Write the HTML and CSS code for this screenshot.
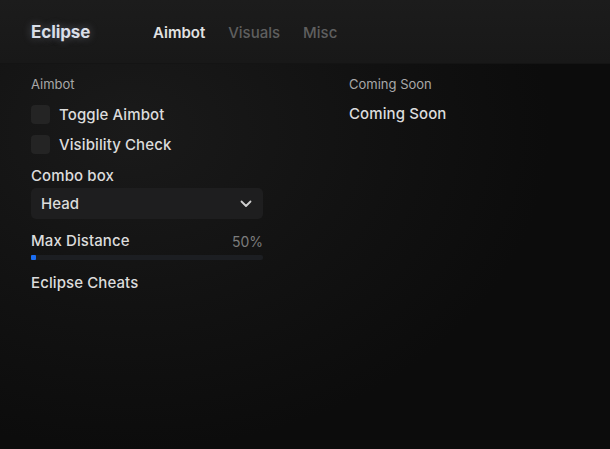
FILE: index.html
```html
<!DOCTYPE html>
<html>
<head>
<meta charset="utf-8">
<link rel="stylesheet" href="styles.css">
</head>
<body>
<div class="app">
  <header class="header">
    <div class="brand">Eclipse</div>
    <nav class="tabs">
      <span class="tab active">Aimbot</span>
      <span class="tab">Visuals</span>
      <span class="tab">Misc</span>
    </nav>
  </header>
  <main class="content">
    <section class="col left">
      <div class="section-title">Aimbot</div>
      <label class="check"><span class="box"></span><span class="check-label">Toggle Aimbot</span></label>
      <label class="check"><span class="box"></span><span class="check-label">Visibility Check</span></label>
      <div class="field-label">Combo box</div>
      <div class="combo">
        <span>Head</span>
        <svg class="chev" width="12" height="8" viewBox="0 0 12 8"><path d="M1.5 1.5 L6 6 L10.5 1.5" fill="none" stroke="#d0d0d0" stroke-width="1.8" stroke-linecap="round" stroke-linejoin="round"/></svg>
      </div>
      <div class="slider-head"><span class="field-label">Max Distance</span><span class="value">50%</span></div>
      <div class="track"><span class="thumb"></span></div>
      <div class="field-label footer">Eclipse Cheats</div>
    </section>
    <section class="col right">
      <div class="section-title">Coming Soon</div>
      <div class="field-label big">Coming Soon</div>
    </section>
  </main>
</div>
</body>
</html>
```

FILE: styles.css
```css
* { box-sizing: border-box; }
html, body { margin: 0; padding: 0; }
body {
  width: 610px;
  height: 449px;
  overflow: hidden;
  background: #0e0e0e;
  font-family: Inter, "Noto Sans", sans-serif;
}
.app {
  width: 610px;
  height: 449px;
  display: flex;
  flex-direction: column;
  background: radial-gradient(ellipse 420px 320px at 130px 130px, #1a1a1a 0%, #121212 55%, #0c0c0c 100%);
}
.header {
  height: 63px;
  display: flex;
  align-items: center;
  padding-left: 31px;
  background: linear-gradient(180deg, #1c1c1c 0%, #181818 100%);
  box-shadow: 0 1px 0 #141414;
}
.brand {
  font-size: 17px;
  font-weight: 700;
  color: #d9dee8;
  text-shadow: 0 0 8px rgba(200, 210, 230, 0.35);
  width: 122px;
  letter-spacing: -0.1px;
  padding-top: 1px;
}
.tabs {
  display: flex;
  gap: 23px;
  padding-top: 2px;
}
.tab {
  font-size: 15px;
  font-weight: 500;
  color: #5f5f5f;
}
.tab.active {
  color: #e2e2e2;
  font-weight: 600;
}
.content {
  display: flex;
  padding: 12px 0 0 31px;
}
.col { display: flex; flex-direction: column; }
.left { width: 232px; }
.right { margin-left: 86px; }
.section-title {
  font-size: 13px;
  color: #a8a8a8;
  height: 18px;
  line-height: 18px;
}
.check {
  display: flex;
  align-items: center;
  height: 19px;
  margin-top: 12px;
}
.check + .check { margin-top: 11px; }
.box {
  width: 19px;
  height: 19px;
  border-radius: 4px;
  background: #242424;
  margin-right: 9px;
}
.check-label, .field-label {
  font-size: 15px;
  font-weight: 500;
  color: #dcdcdc;
  letter-spacing: 0.1px;
}
.field-label { line-height: 20px; }
.check + .field-label { margin-top: 12px; }
.big { margin-top: 11px; height: 20px; line-height: 20px; }
.combo {
  margin-top: 2px;
  height: 31px;
  border-radius: 5px;
  background: #1e1e1f;
  display: flex;
  align-items: center;
  justify-content: space-between;
  padding: 0 11px 0 10px;
  font-size: 15px;
  font-weight: 500;
  color: #dcdcdc;
}
.chev { margin-top: 1px; }
.slider-head {
  display: flex;
  justify-content: space-between;
  align-items: center;
  margin-top: 12px;
}
.value {
  font-size: 14px;
  color: #7c7c7c;
}
.track {
  margin-top: 4px;
  height: 5px;
  background: #1c1e22;
  border-radius: 2px;
  position: relative;
}
.thumb {
  position: absolute;
  left: 0;
  top: 0;
  width: 5px;
  height: 5px;
  border-radius: 1px;
  background: #1b6ef3;
}
.footer { margin-top: 13px; }
```
